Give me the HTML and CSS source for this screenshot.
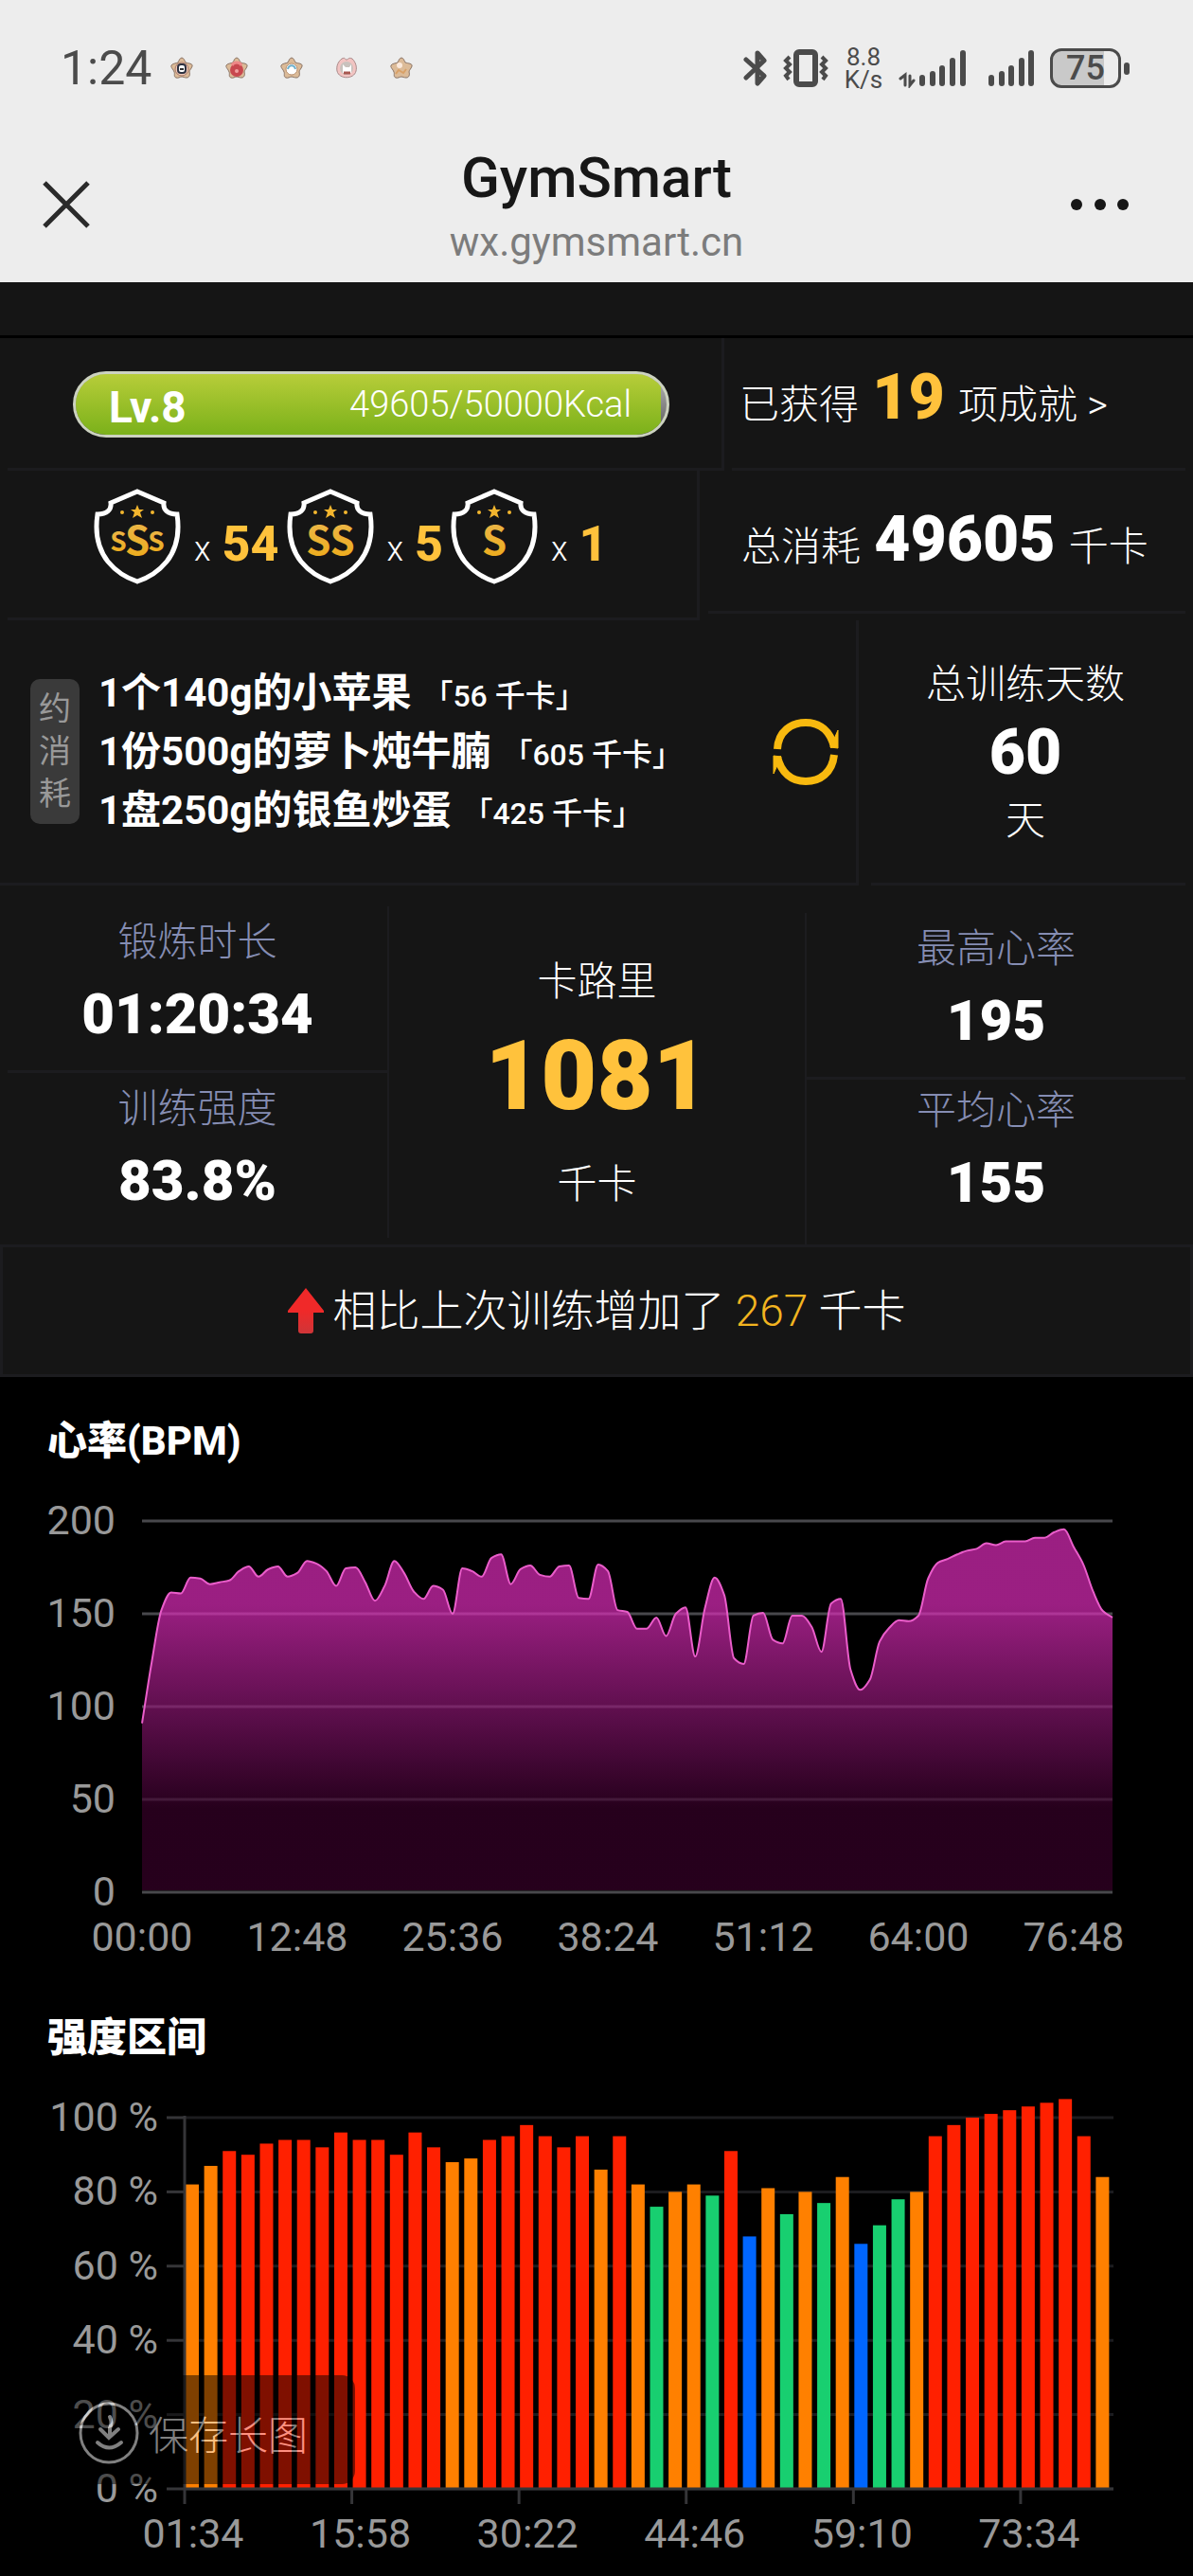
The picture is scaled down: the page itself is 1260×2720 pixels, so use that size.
FILE: index.html
```html
<!DOCTYPE html>
<html lang="zh-CN">
<head>
<meta charset="utf-8">
<meta name="viewport" content="width=device-width, initial-scale=1">
<title>GymSmart</title>
<link rel="stylesheet" href="styles.css">
</head>
<body>
<header class="top">
  <div class="status">
    <span class="clock">1:24</span>
    <svg class="stars" width="256" height="24" viewBox="0 0 256 24">
      <defs>
        <path id="star" d="M12 1 C14 1 15 4 16 6 C19 7 24 7 23 10 C22 13 20 14 20 16 C21 19 20 22 17 22 C15 22 13 21 12 21 C10 21 8 23 6 22 C3 21 5 18 4 16 C3 13 0 11 1 9 C2 7 6 7 8 6 C9 4 10 1 12 1Z" fill="#dcbb98" stroke="#8a7466" stroke-width="1"/>
      </defs>
      <g><use href="#star"/><circle cx="12" cy="13" r="7" fill="#efc9b8" stroke="#a67868"/><rect x="8" y="8" width="8" height="9" rx="3" fill="#fff" stroke="#2d3140" stroke-width="2"/><path d="M10 13h4" stroke="#333" stroke-width="2"/></g>
      <g transform="translate(58 0)"><use href="#star"/><circle cx="12" cy="14" r="7" fill="#c8484f"/><path d="M7 9c2-4 8-4 10 0" fill="none" stroke="#e88" stroke-width="3"/><circle cx="12" cy="15" r="2" fill="#f0a0a0"/></g>
      <g transform="translate(116 0)"><use href="#star"/><circle cx="12" cy="13" r="6" fill="#fff" stroke="#b89070"/><path d="M8 13c1-5 7-5 8 0" fill="none" stroke="#6fb0cc" stroke-width="2"/></g>
      <g transform="translate(174 0)"><path d="M7 2c4-2 3 1 5 1s2-3 6-1c4 4 5 9 4 13-2 9-18 9-20 0C1 10 3 5 7 2Z" fill="#f2c4c2" stroke="#a98a8a"/><circle cx="12" cy="12" r="7" fill="#c9c2bd"/><path d="M8 17V8l3 3h4l2-3v9Z" fill="#fff"/><path d="M9 17h7" stroke="#a85850" stroke-width="3"/></g>
      <g transform="translate(232 0)"><use href="#star"/><circle cx="10" cy="9" r="3" fill="#fbe9dc"/><path d="M6 18l3-4 5 3 3-4" fill="none" stroke="#d9a066" stroke-width="2"/></g>
    </svg>
    <div class="signals">
      <svg width="26" height="42" viewBox="0 0 26 42" fill="none" stroke="#4b4b4b" stroke-width="5" stroke-linejoin="round" stroke-linecap="round"><path d="M3 12L22 29L15 37V5L22 13L3 31"/></svg>
      <svg width="48" height="42" viewBox="0 0 48 42" fill="none" stroke="#4b4b4b"><rect x="14" y="4" width="20" height="34" rx="3" stroke-width="6"/><path d="M7 9L3 13L7 17L3 21L7 25L3 29L6 33M41 9L45 13L41 17L45 21L41 25L45 29L42 33" stroke-width="4"/></svg>
      <span class="rate"><span>8.8</span><span>K/s</span></span>
      <svg width="78" height="42" viewBox="0 0 78 42" fill="none" stroke="#4b4b4b" stroke-linecap="round"><path d="M2 32L7 28V39M12 29V39L16 34" stroke-width="3"/><path d="M25 37V31M36 37V27M46 37V21M57 37V13M68 37V5" stroke-width="6"/></svg>
      <svg width="50" height="42" viewBox="0 0 50 42" fill="none" stroke="#4b4b4b" stroke-width="6" stroke-linecap="round"><path d="M4 37V31M15 37V27M25 37V21M36 37V13M46 37V5"/></svg>
      <span class="battery">75</span>
    </div>
  </div>
  <div class="nav">
    <button class="icon-btn close" aria-label="关闭"><svg width="50" height="50" viewBox="0 0 50 50" stroke="#2a2a2a" stroke-width="5"><path d="M2 2L48 48M48 2L2 48"/></svg></button>
    <div class="site">
      <h1>GymSmart</h1>
      <p>wx.gymsmart.cn</p>
    </div>
    <button class="icon-btn more" aria-label="更多"><svg width="64" height="14" viewBox="0 0 64 14" fill="#171717"><circle cx="7" cy="7" r="6"/><circle cx="32" cy="7" r="6"/><circle cx="56" cy="7" r="6"/></svg></button>
  </div>
</header>

<main>
  <div class="strip"></div>
  <section class="panel">
    <div class="row level-row">
      <div class="cell ruled">
        <div class="level"><div class="level-fill" style="width:99%"></div><b>Lv.8</b><span>49605/50000Kcal</span></div>
      </div>
      <div class="cell right"><a class="line" href="#achievements">已获得 <strong class="gold">19</strong> 项成就 &gt;</a></div>
    </div>

    <div class="row badge-row">
      <div class="cell ruled badges">
        <svg class="shield" viewBox="0 0 92 102"><defs>
          <linearGradient id="gold" x1="0" y1="0" x2="0" y2="1"><stop offset="0" stop-color="#e9b956"/><stop offset="1" stop-color="#eeaa14"/></linearGradient>
          <g id="frame"><path d="M46 4L74 16C73 23 78 28 88 28C91 48 88 64 77 78C68 89 58 95 46 99C34 95 24 89 15 78C4 64 1 48 4 28C14 28 19 23 18 16Z" fill="none" stroke="#fff" stroke-width="5"/><path d="M46 18l2 5h5l-4 3 2 6-5-3-5 3 2-6-4-3h5Z" fill="#f3b62e"/><circle cx="30" cy="26" r="2" fill="#f3b62e"/><circle cx="62" cy="26" r="2" fill="#f3b62e"/></g></defs>
          <use href="#frame"/><text x="26" y="67" class="s-small">S</text><text x="66" y="67" class="s-small">S</text><text x="46" y="71" class="s-big">S</text></svg>
        <span class="times">x</span><b>54</b>
        <svg class="shield" viewBox="0 0 92 102"><use href="#frame"/><text x="46" y="71" class="s-big">SS</text></svg>
        <span class="times">x</span><b>5</b>
        <svg class="shield" viewBox="0 0 92 102"><use href="#frame"/><text x="46" y="71" class="s-big">S</text></svg>
        <span class="times">x</span><b>1</b>
      </div>
      <div class="cell right"><p class="line">总消耗 <strong>49605</strong> 千卡</p></div>
    </div>

    <div class="row food-row">
      <div class="cell ruled foods">
        <span class="tag">约消耗</span>
        <ul>
          <li>1个140g的小苹果<small>「56 千卡」</small></li>
          <li>1份500g的萝卜炖牛腩<small>「605 千卡」</small></li>
          <li>1盘250g的银鱼炒蛋<small>「425 千卡」</small></li>
        </ul>
        <button class="icon-btn refresh" aria-label="换一批"><svg width="70" height="72" viewBox="0 0 70 72" fill="none" stroke="#f8b90f" stroke-width="8"><path d="M5 33C6 14 20 5 35 5C50 5 61 14 65 31M65 39C63 58 50 67 35 67C20 67 9 58 5 41"/><path d="M61 31L69 13V32ZM9 41L1 59V40Z" fill="#f8b90f" stroke-width="1"/></svg></button>
      </div>
      <div class="cell right days"><span>总训练天数</span><strong>60</strong><span>天</span></div>
    </div>

    <div class="stats">
      <div class="stat-col first">
        <div class="stat"><span>锻炼时长</span><strong>01:20:34</strong></div>
        <div class="stat"><span>训练强度</span><strong>83.8%</strong></div>
      </div>
      <div class="calories"><span>卡路里</span><strong>1081</strong><span>千卡</span></div>
      <div class="stat-col last">
        <div class="stat"><span>最高心率</span><strong>195</strong></div>
        <div class="stat"><span>平均心率</span><strong>155</strong></div>
      </div>
    </div>

    <p class="compare"><svg width="38" height="48" viewBox="0 0 38 48"><defs><linearGradient id="up" x1="0" y1="0" x2="0" y2="1"><stop offset="0.5" stop-color="#f02929"/><stop offset="1" stop-color="#cf3538"/></linearGradient></defs><path d="M19 0L38 24V26H27V45Q27 48 24 48H14Q11 48 11 45V26H0V24Z" fill="url(#up)"/></svg><span>相比上次训练增加了 <em>267</em> 千卡</span></p>
  </section>

  <section class="chart">
    <h2>心率(BPM)</h2>
    <svg id="heart" viewBox="0 0 1260 500" role="img" aria-label="心率(BPM)"></svg>
  </section>
  <section class="chart">
    <h2>强度区间</h2>
    <svg id="zones" viewBox="0 0 1260 536" role="img" aria-label="强度区间"></svg>
  </section>
</main>

<button class="save"><svg width="64" height="66" viewBox="0 0 64 66" fill="none" stroke="#fff" stroke-width="4" stroke-linecap="round"><ellipse cx="32" cy="33" rx="30" ry="31" stroke-width="3"/><path d="M33 16Q36 22 33 28V37M23 29L32 38L42 29M20 43Q32 54 45 43"/></svg>保存长图</button>
<script src="script.js"></script>
</body>
</html>
```
FILE: styles.css
```css
* { box-sizing: border-box; }
body, h1, h2, p, ul { margin: 0; padding: 0; }
body {
  background: #000;
  color: #fff;
  font-family: Roboto, "Noto Sans CJK SC", sans-serif;
  font-size: 42px;
  font-weight: 300;
}
ul { list-style: none; }
button { border: 0; padding: 0; background: none; color: inherit; font: inherit; }
a { color: inherit; text-decoration: none; }
svg { display: block; flex: none; }
.icon-btn { display: flex; align-items: center; justify-content: center; }

/* phone status bar and page title */
.top { background: #ededed; height: 298px; }
.status { display: flex; align-items: center; padding: 42px 67px 0 64px; height: 102px; color: #4b4b4b; }
.clock { font-size: 50px; font-weight: 400; line-height: 60px; }
.stars { margin-left: 20px; }
.signals { display: flex; align-items: center; gap: 16px; margin-left: auto; }
.rate { display: flex; flex-direction: column; font-size: 26px; font-weight: 400; line-height: 24px; text-align: center; width: 42px; }
.battery {
  position: relative;
  width: 75px; height: 42px;
  margin-right: 9px;
  border: 3px solid #4b4b4b; border-radius: 12px;
  background: linear-gradient(90deg, #c9c9c9 78%, transparent 78%);
  font-size: 36px; font-weight: 500; line-height: 37px; text-align: center;
}
.battery::after {
  content: "";
  position: absolute; right: -12px; top: 12px;
  width: 6px; height: 13px; border-radius: 3px;
  background: #4b4b4b;
}
.nav { display: flex; align-items: center; justify-content: space-between; padding: 46px 66px 0 45px; }
.close { width: 85px; height: 60px; justify-content: flex-start; }
.more { width: 64px; height: 60px; }
.site { text-align: center; color: #171717; }
.site h1 { font-size: 60px; font-weight: 500; line-height: 80px; }
.site p { color: #7c7c7c; font-size: 42px; font-weight: 400; line-height: 56px; }

/* summary panel */
.strip { height: 59px; background: #151515; border-bottom: 3px solid #000; }
.panel { background: #151515; }
.row { display: grid; }
.cell { border-bottom: 3px solid #1c1c1f; }
.ruled { border-right: 3px solid #1c1c1f; }
.line { display: block; white-space: nowrap; line-height: 78px; }
.line strong { margin: 0 4px; font-size: 66px; font-weight: 900; }
.gold { color: #ffc23c; }

.level-row { grid-template-columns: 757fr 479fr; column-gap: 8px; padding: 0 8px; height: 140px; }
.level-row .line { padding: 24px 0 0 8px; }
.level {
  position: relative;
  display: flex; align-items: center; justify-content: space-between;
  height: 70px; margin: 35px 55px 0 69px; padding: 0 37px 0 35px;
  border: 3px solid #ccd2c0; border-radius: 35px;
  background: linear-gradient(#bbb, #555);
  overflow: hidden;
}
.level-fill { position: absolute; inset: 0 auto 0 0; background: linear-gradient(#b7cd39, #7bb11a); }
.level b, .level span { position: relative; line-height: 64px; }
.level b { font-size: 46px; font-weight: 700; padding-top: 6px; }
.level span { font-size: 38px; }

.badge-row { grid-template-columns: 731fr 504fr; column-gap: 9px; padding: 0 8px; height: 158px; }
.badge-row .right { height: 151px; }
.badge-row .line { padding: 34px 0 0 35px; }
.badges { display: flex; align-items: baseline; padding: 18px 0 0 91px; }
.shield { width: 92px; height: 102px; align-self: flex-start; }
.badges b { color: #ffc23c; font-size: 52px; font-weight: 800; line-height: 60px; padding: 30px 8px 0 12px; }
.times { font-size: 36px; padding-left: 14px; }
.s-small, .s-big { fill: url(#gold); font-family: "Noto Sans CJK SC", sans-serif; font-weight: 700; text-anchor: middle; }
.s-small { font-size: 28px; }
.s-big { font-size: 42px; }

.food-row { grid-template-columns: 907fr 332fr; column-gap: 13px; padding-right: 8px; height: 280px; }
.foods { display: flex; align-items: center; padding-left: 32px; }
.tag {
  width: 52px; padding: 9px 9px;
  border-radius: 10px; background: #3a3a3a; color: #999;
  font-size: 34px; font-weight: 400; line-height: 45px;
}
.foods ul { padding-left: 20px; font-weight: 700; line-height: 62px; white-space: nowrap; }
.foods small { margin-left: 12px; font-size: 32px; font-weight: 500; line-height: 32px; }
.refresh { margin: 0 18px 0 auto; }
.days { display: flex; flex-direction: column; align-items: center; padding: 38px 6px 0 0; line-height: 60px; }
.days strong { font-size: 66px; font-weight: 900; line-height: 84px; }

.stats { display: grid; grid-template-columns: 411fr 439fr 410fr; height: 379px; text-align: center; }
.stats span, .stats strong { display: block; }
.first { margin: 22px 0 7px; padding-left: 8px; border-right: 2px solid #1c1c1f; }
.last { margin-top: 29px; padding-right: 8px; border-left: 2px solid #1c1c1f; }
.stat { padding-top: 8px; }
.last .stat + .stat { padding-top: 3px; }
.stat span { color: #858db3; line-height: 60px; }
.stat strong { padding-top: 10px; font-size: 60px; font-weight: 900; line-height: 72px; }
.stat:first-child { height: 176px; border-bottom: 3px solid #1c1c1f; }
.calories { padding-top: 72px; line-height: 60px; }
.calories strong { color: #ffc23c; font-size: 102px; font-weight: 900; line-height: 138px; }
.calories span:last-child { padding-top: 16px; }

.compare {
  display: flex; align-items: center; justify-content: center; gap: 10px;
  height: 140px;
  border: 3px solid #1c1c1f;
  font-size: 46px; line-height: 60px;
}
.compare em { color: #f2b420; font-style: normal; }

/* charts */
.chart { padding-top: 38px; }
.chart + .chart { padding-top: 70px; }
.chart h2 { padding-left: 50px; font-size: 42px; font-weight: 800; line-height: 60px; }
.chart svg { width: 100%; height: auto; overflow: visible; }
.label { fill: #999; font-size: 43px; font-weight: 400; }
.end { text-anchor: end; }
.mid { text-anchor: middle; }
.grid { stroke: #48484c; stroke-width: 3; }
.faint { stroke: #1c1c1f; stroke-width: 3; }
.axis { stroke: #353538; stroke-width: 3; fill: none; }
.area { fill: url(#pulse); opacity: 0.67; }
.trace { fill: none; stroke: #ea5dca; stroke-width: 2; }
.max { fill: #ff2000; }
.hard { fill: #ff8000; }
.aerobic { fill: #18cf70; }
.warm { fill: #06f; }

.save {
  position: fixed; left: 0; bottom: 97px;
  display: flex; align-items: center; gap: 10px;
  height: 115px; padding: 6px 50px 0 83px;
  border-radius: 0 14px 14px 0;
  background: #000; opacity: 0.5;
  font-size: 42px;
}
```
FILE: script.js
```js
const pulse = [91,124,152,161.5,161,169.5,169,166,167,168,173,175.5,170,174,175.5,170,172,178.5,177,173,165,174.5,175,167,157,165,178.5,172,162,158,165,163,150,174.5,173,170,180,182,166,174,176,171,170,175.5,176,158.5,158,176.5,173,152,151,142,142,148,138,150,153.5,127,153,169.5,160,126,123,149,150.5,136,134,149,149,143,129.5,155.5,158,120,109,114.5,135,142.5,146.5,146,149,169,177.5,179.5,182,184,185,188,187,189,189,189,191,191,194,195.5,186,176.5,162,151.5,148];
const zones = [82,87,91,90,93,94,94,92,96,94,94,90,96,92,88,89,94,95,98,95,92,95,86,95,82,76,80,82,79,91,68,81,74,80,77,84,66,71,78,80,95,98,100,101,102,103,104,105,95,84];

const line = (cls, x1, y1, x2, y2) => `<line class="${cls}" x1="${x1}" y1="${y1}" x2="${x2}" y2="${y2}"/>`;
const text = (cls, x, y, s) => `<text class="label ${cls}" x="${x}" y="${y}">${s}</text>`;

// Monotone cubic through equally spaced points
function smooth(pts, step) {
  const slope = pts.slice(1).map((p, i) => (p[1] - pts[i][1]) / step);
  const tan = pts.map((p, i) => {
    if (i === 0) return slope[0];
    if (i === pts.length - 1) return slope[i - 1];
    const a = slope[i - 1], b = slope[i];
    return a * b <= 0 ? 0 : 2 * a * b / (a + b);
  });
  let d = `M${pts[0]}`;
  for (let i = 1; i < pts.length; i++) {
    const [x0, y0] = pts[i - 1], [x1, y1] = pts[i], k = step / 3;
    d += `C${x0 + k} ${y0 + k * tan[i - 1]} ${x1 - k} ${y1 - k * tan[i]} ${x1} ${y1}`;
  }
  return d;
}

function drawHeart() {
  const left = 150, right = 1175, top = 54, base = 446;
  const step = (right - left) / (pulse.length - 1);
  const y = v => base - v * (base - top) / 200;
  const curve = smooth(pulse.map((v, i) => [left + i * step, y(v)]), step);
  let s = `<defs><linearGradient id="pulse" gradientUnits="userSpaceOnUse" x1="0" y1="${y(155)}" x2="0" y2="${y(45)}"><stop offset="0" stop-color="#e72ec2"/><stop offset="1" stop-color="#39002a"/></linearGradient></defs>`;
  for (let v = 0; v <= 200; v += 50) {
    s += line('grid', left, y(v), right, y(v)) + text('end', 122, y(v) + 14, v);
  }
  s += `<path class="area" d="${curve}V${base - 2}H${left}Z"/><path class="trace" d="${curve}"/>`;
  ['00:00', '12:48', '25:36', '38:24', '51:12', '64:00', '76:48'].forEach((t, i) => {
    s += text('mid', left + i * 164, base + 62, t);
  });
  document.getElementById('heart').innerHTML = s;
}

function drawZones() {
  const left = 195, right = 1176, top = 54, base = 446;
  const step = (right - left) / zones.length;
  const y = v => base - v * (base - top) / 100;
  let s = '';
  for (let v = 0; v <= 100; v += 20) {
    s += line('faint', left, y(v), right, y(v)) + line('axis', 176, y(v), left, y(v)) + text('end', 167, y(v) + 14, v + ' %');
  }
  zones.forEach((v, i) => {
    const cls = v >= 90 ? 'max' : v >= 80 ? 'hard' : v >= 70 ? 'aerobic' : 'warm';
    s += `<rect class="${cls}" x="${left + 1 + i * step}" y="${y(v)}" width="14" height="${base - y(v)}"/>`;
  });
  s += line('axis', left, top - 2, left, base) + line('axis', left, base, right, base);
  ['01:34', '15:58', '30:22', '44:46', '59:10', '73:34'].forEach((t, i) => {
    const x = left + i * 9 * step;
    s += line('axis', x, base, x, base + 16) + text('mid', x + 9, base + 62, t);
  });
  document.getElementById('zones').innerHTML = s;
}

drawHeart();
drawZones();
```
